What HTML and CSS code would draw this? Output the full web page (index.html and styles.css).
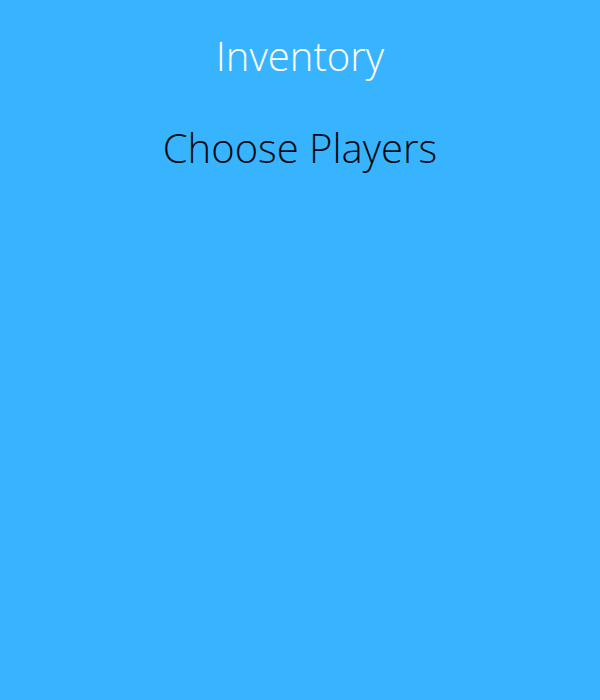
FILE: index.html
```html
<!DOCTYPE html>
<html>
<head>
<meta charset="utf-8">
<link rel="stylesheet" href="styles.css">
</head>
<body>
<div class="app">
  <h1 class="title">Inventory</h1>
  <h2 class="subtitle">Choose Players</h2>
</div>
</body>
</html>
```
FILE: styles.css
```css
html, body {
  margin: 0;
  padding: 0;
  height: 100%;
  background: #38b4ff;
}
.app {
  font-family: "Open Sans", sans-serif;
  font-weight: 300;
  text-align: center;
  padding-top: 29px;
}
.title {
  margin: 0;
  font-size: 40px;
  font-weight: 300;
  line-height: 54px;
  color: #ffffff;
}
.subtitle {
  margin: 38px 0 0;
  font-size: 40px;
  font-weight: 300;
  line-height: 54px;
  color: #050a12;
}
```
